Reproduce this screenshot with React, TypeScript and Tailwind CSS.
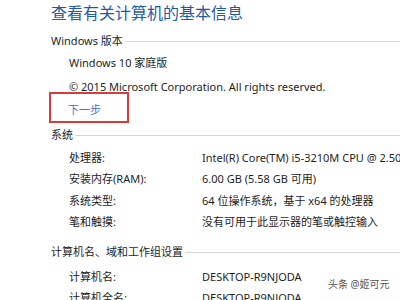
import React from 'react';

const font = { fontFamily: '"Noto Sans", "Noto Sans CJK SC", sans-serif' };

interface Row {
  label: string;
  value: string;
}

const systemRows: Row[] = [
  { label: '处理器:', value: 'Intel(R) Core(TM) i5-3210M CPU @ 2.50GHz   2.50 GHz' },
  { label: '安装内存(RAM):', value: '6.00 GB (5.58 GB 可用)' },
  { label: '系统类型:', value: '64 位操作系统，基于 x64 的处理器' },
  { label: '笔和触摸:', value: '没有可用于此显示器的笔或触控输入' },
];

const nameRows: Row[] = [
  { label: '计算机名:', value: 'DESKTOP-R9NJODA' },
  { label: '计算机全名:', value: 'DESKTOP-R9NJODA' },
];

const SectionHeader = ({ title, className }: { title: string; className?: string }) => (
  <div className={`flex items-center h-[20px] text-[11px] text-[#1e1e1e] ${className ?? ''}`}>
    <span className="whitespace-nowrap">{title}</span>
    <div className="flex-1 h-px bg-[#d6d6d6] ml-[2px]" />
  </div>
);

const InfoRow = ({ row }: { row: Row }) => (
  <div className="flex items-center h-[21.5px] text-[11px] text-[#1e1e1e] whitespace-nowrap">
    <span className="w-[151px] shrink-0 pl-[18px]">{row.label}</span>
    <span>{row.value}</span>
  </div>
);

export default function App() {
  return (
    <div className="relative w-[400px] h-[300px] overflow-hidden bg-white pl-[51px]" style={font}>
      <div className="h-[26px] leading-[26px] text-[16px] text-[#1f5aa6] whitespace-nowrap">
        查看有关计算机的基本信息
      </div>

      <SectionHeader title="Windows 版本" className="mt-[5px]" />
      <div className="h-[22px] leading-[22px] mt-px pl-[18px] text-[11px] text-[#1e1e1e] whitespace-nowrap">
        Windows 10 家庭版
      </div>
      <div className="h-[22px] leading-[22px] mt-[2px] pl-[18px] text-[11px] text-[#1e1e1e] whitespace-nowrap">
        © 2015 Microsoft Corporation. All rights reserved.
      </div>

      <div className="-ml-[2px] w-[80px] h-[31px] border-2 border-[#d93a3c] pl-[17px] pt-[5px] -mt-[6px]">
        <span className="block leading-[22px] text-[11px] text-[#3a72c8]">下一步</span>
      </div>

      <SectionHeader title="系统" className="mt-[2px]" />
      <div className="mt-[2px]">
        {systemRows.map((r) => (
          <InfoRow key={r.label} row={r} />
        ))}
      </div>

      <SectionHeader title="计算机名、域和工作组设置" className="mt-[9px]" />
      <div className="mt-[4px]">
        {nameRows.map((r) => (
          <InfoRow key={r.label} row={r} />
        ))}
      </div>

      <div className="absolute left-[328px] top-[276px] text-[10px] leading-[16px] text-[#555555] whitespace-nowrap">
        头条 @姬可元
      </div>
    </div>
  );
}
